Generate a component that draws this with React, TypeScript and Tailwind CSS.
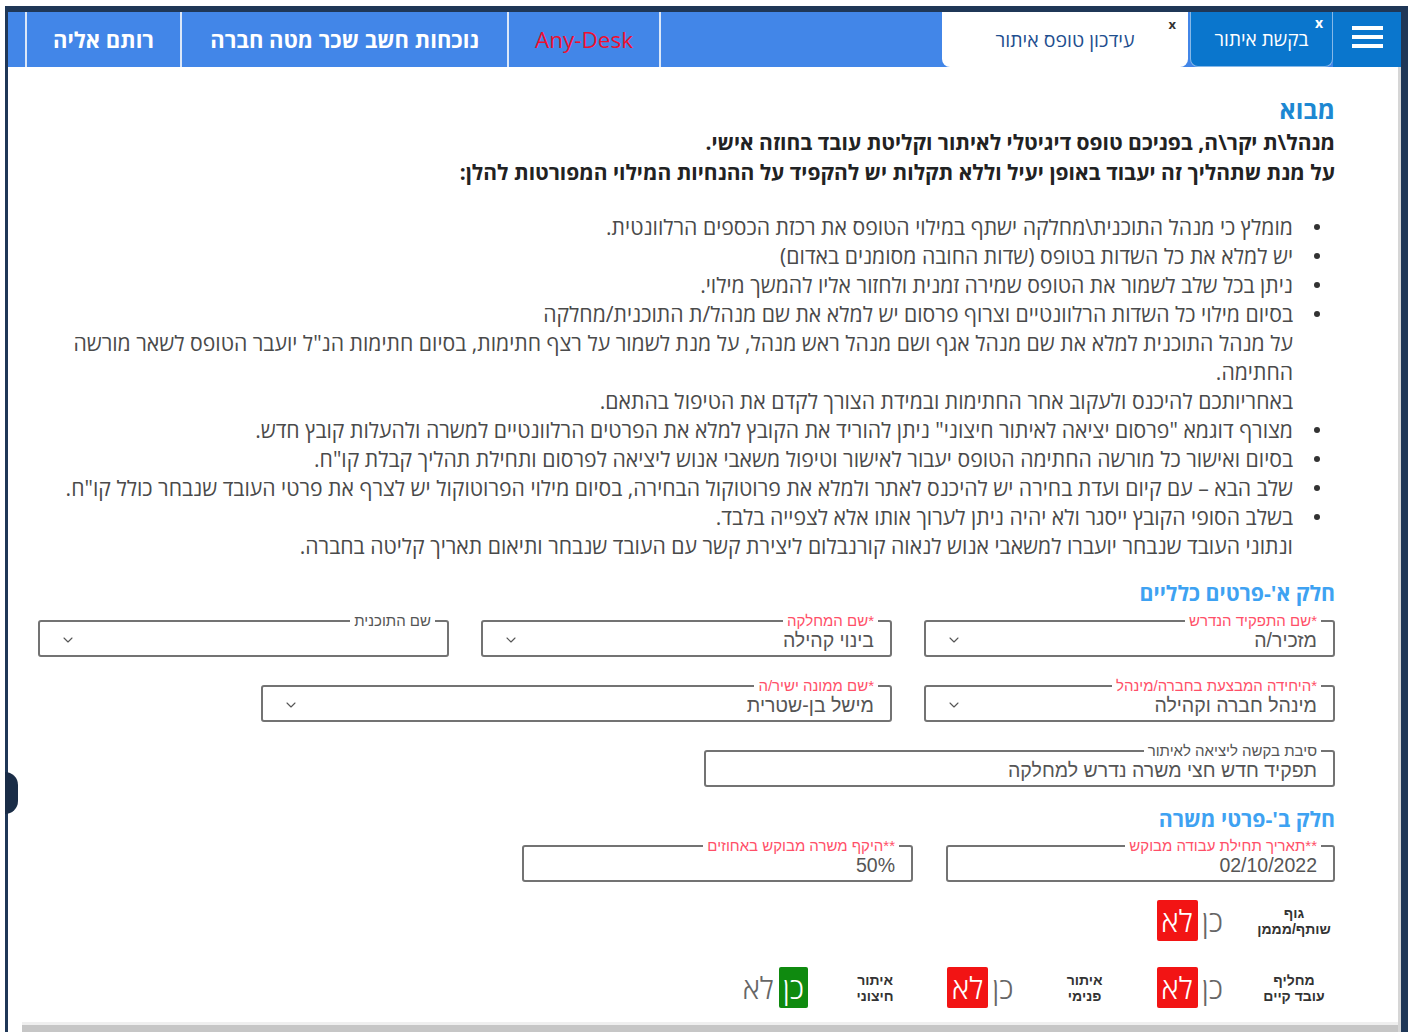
import { ChevronDown } from "lucide-react";

type FieldProps = {
  label: string;
  value?: string;
  required?: boolean;
  select?: boolean;
  width: string;
};

function Field({ label, value, required, select = true, width }: FieldProps) {
  return (
    <fieldset
      className={`${width} border-2 border-[#737373] rounded-[3px] px-[12px] pb-[4px] font-['Liberation_Sans','Open_Sans',sans-serif]`}
    >
      <legend
        className={`px-[4px] text-[15px] leading-[16px] ${required ? "text-[#ff4f68]" : "text-[#555]"}`}
      >
        {label}
      </legend>
      <div className="flex items-center h-[22px]">
        <span className="flex-1 pr-[4px] text-[19.5px] leading-[22px] text-[#555]">{value}</span>
        {select && <ChevronDown size={16} strokeWidth={1.6} className="text-[#555] ml-[8px]" />}
      </div>
    </fieldset>
  );
}

type Choice = "yes" | "no";

function YesNo({ label, value }: { label: [string, string]; value: Choice }) {
  return (
    <div className="flex items-center gap-[26px]">
      <div className="w-[82px] flex flex-col items-center text-[14px] font-bold leading-[16px] text-[#333] font-['Liberation_Sans','Open_Sans',sans-serif]">
        <span>{label[0]}</span>
        <span>{label[1]}</span>
      </div>
      <div className="flex items-center text-[30px] font-light leading-[41px]">
        <span
          className={`px-[4px] rounded-[2px] ${value === "yes" ? "bg-[#0f8a0f] text-white" : "text-[#666]"}`}
        >
          כן
        </span>
        <span
          className={`px-[5px] rounded-[2px] ${value === "no" ? "bg-[#f21414] text-white" : "text-[#666]"}`}
        >
          לא
        </span>
      </div>
    </div>
  );
}

const notes: { text: string; bullet: boolean }[] = [
  { text: "מומלץ כי מנהל התוכנית\\מחלקה ישתף במילוי הטופס את רכזת הכספים הרלוונטית.", bullet: true },
  { text: "יש למלא את כל השדות בטופס (שדות החובה מסומנים באדום)", bullet: true },
  { text: "ניתן בכל שלב לשמור את הטופס שמירה זמנית ולחזור אליו להמשך מילוי.", bullet: true },
  { text: "בסיום מילוי כל השדות הרלוונטיים וצרוף פרסום יש למלא את שם מנהל/ת התוכנית/מחלקה", bullet: true },
  {
    text: "על מנהל התוכנית למלא את שם מנהל אגף ושם מנהל ראש מנהל, על מנת לשמור על רצף חתימות, בסיום חתימות הנ\"ל יועבר הטופס לשאר מורשה החתימה.",
    bullet: false,
  },
  { text: "באחריותכם להיכנס ולעקוב אחר החתימות ובמידת הצורך לקדם את הטיפול בהתאם.", bullet: false },
  {
    text: "מצורף דוגמא \"פרסום יציאה לאיתור חיצוני\" ניתן להוריד את הקובץ למלא את הפרטים הרלוונטיים למשרה ולהעלות קובץ חדש.",
    bullet: true,
  },
  {
    text: "בסיום ואישור כל מורשה החתימה הטופס יעבור לאישור וטיפול משאבי אנוש ליציאה לפרסום ותחילת תהליך קבלת קו\"ח.",
    bullet: true,
  },
  {
    text: "שלב הבא – עם קיום ועדת בחירה יש להיכנס לאתר ולמלא את פרוטוקול הבחירה, בסיום מילוי הפרוטוקול יש לצרף את פרטי העובד שנבחר כולל קו\"ח.",
    bullet: true,
  },
  { text: "בשלב הסופי הקובץ ייסגר ולא יהיה ניתן לערוך אותו אלא לצפייה בלבד.", bullet: true },
  {
    text: "ונתוני העובד שנבחר יועברו למשאבי אנוש לנאוה קורנבלום ליצירת קשר עם העובד שנבחר ותיאום תאריך קליטה בחברה.",
    bullet: false,
  },
];

export default function App() {
  return (
    <div
      dir="rtl"
      className="h-[1032px] bg-white pt-[6px] px-[5px] overflow-hidden font-['Open_Sans','Liberation_Sans',sans-serif]"
    >
      <div className="relative h-full flex flex-col border-t-[6px] border-l-[3px] border-r-[7px] border-[#1f3757] bg-white">
        {/* top bar */}
        <header className="h-[55px] flex bg-[#4286e8] shrink-0">
          <div className="w-[68px] bg-[#0a76cd] flex items-center justify-center pb-[6px]">
            <div className="flex flex-col gap-[5px]">
              <span className="block w-[31px] h-[4px] bg-white" />
              <span className="block w-[31px] h-[4px] bg-white" />
              <span className="block w-[31px] h-[4px] bg-white" />
            </div>
          </div>
          <div className="relative w-[143px] bg-[#0a76cd] border-x border-b border-[#86b8e8] rounded-b-[8px] flex items-center justify-center text-[19px] text-white">
            בקשת איתור
            <span className="absolute top-[4px] right-[9px] text-[14px] font-bold leading-none">x</span>
          </div>
          <div className="relative w-[246px] mr-[2px] bg-white rounded-b-[8px] flex items-center justify-center text-[19.5px] text-[#1f4f8f]">
            עידכון טופס איתור
            <span className="absolute top-[6px] right-[12px] text-[13px] font-bold leading-none text-[#333]">x</span>
          </div>
          <div className="flex-1" />
          <nav className="flex ml-[17px]">
            <a className="w-[154px] flex items-center justify-center border-x-2 border-[#dbe7f8] text-[22.5px] font-medium text-[#ee1030]">
              Any-Desk
            </a>
            <a className="w-[327px] flex items-center justify-center border-l-2 border-[#dbe7f8] text-[22px] font-bold text-white">
              נוכחות חשב שכר מטה חברה
            </a>
            <a className="w-[155px] flex items-center justify-center border-l-2 border-[#dbe7f8] text-[22px] font-bold text-white">
              רותם אליה
            </a>
          </nav>
        </header>

        {/* page body */}
        <main className="flex-1 flex flex-col border-r-[3px] border-[#d6d6d6] min-h-0">
          <div className="flex-1 pr-[63px] pl-[30px] pt-[28px]">
            <h2 className="text-[25px] leading-[29px] font-bold text-[#1d88d2]">מבוא</h2>
            <p className="mt-[3px] text-[21px] leading-[30px] font-bold text-[#222]">
              מנהל\ת יקר\ה, בפניכם טופס דיגיטלי לאיתור וקליטת עובד בחוזה אישי.
              <br />
              על מנת שתהליך זה יעבוד באופן יעיל וללא תקלות יש להקפיד על ההנחיות המילוי המפורטות להלן:
            </p>

            <ul className="mt-[25px] text-[21.2px] leading-[29px] text-[#4a4a4a]">
              {notes.map((n, i) => (
                <li key={i} className="flex">
                  <span className="w-[42px] shrink-0 flex justify-start pr-[15px] pt-[12px]">
                    {n.bullet && <span className="block w-[6px] h-[6px] rounded-full bg-[#333]" />}
                  </span>
                  <span className="flex-1">{n.text}</span>
                </li>
              ))}
            </ul>

            <h3 className="mt-[20px] text-[21.3px] leading-[26px] font-bold text-[#3ea2f2]">חלק א'-פרטים כלליים</h3>
            <div className="mt-[7px] flex flex-col gap-[21px]">
              <div className="flex gap-[32px]">
                <Field width="w-[411px]" label="*שם התפקיד הנדרש" value="מזכיר/ה" required />
                <Field width="w-[411px]" label="*שם המחלקה" value="בינוי קהילה" required />
                <Field width="w-[411px]" label="שם התוכנית" />
              </div>
              <div className="flex gap-[32px]">
                <Field width="w-[411px]" label="*היחידה המבצעת בחברה/מינהל" value="מינהל חברה וקהילה" required />
                <Field width="w-[631px]" label="*שם ממונה ישיר/ה" value="מישל בן-שטרית" required />
              </div>
              <div className="flex">
                <Field width="w-[631px]" label="סיבת בקשה ליציאה לאיתור" value="תפקיד חדש חצי משרה נדרש למחלקה" select={false} />
              </div>
            </div>

            <h3 className="mt-[19px] text-[21.3px] leading-[26px] font-bold text-[#3ea2f2]">חלק ב'-פרטי משרה</h3>
            <div className="mt-[6px] flex gap-[33px]">
              <Field width="w-[389px]" label="**תאריך תחילת עבודה מבוקש" value="02/10/2022" required select={false} />
              <Field width="w-[391px]" label="**היקף משרה מבוקש באחוזים" value="50%" required select={false} />
            </div>

            <div className="mt-[18px] flex flex-col gap-[26px]">
              <div className="flex gap-[31px]">
                <YesNo label={["גוף", "שותף/מממן"]} value="no" />
              </div>
              <div className="flex gap-[31px]">
                <YesNo label={["מחליף", "עובד קיים"]} value="no" />
                <YesNo label={["איתור", "פנימי"]} value="no" />
                <YesNo label={["איתור", "חיצוני"]} value="yes" />
              </div>
            </div>
          </div>

          {/* horizontal scroll track */}
          <div className="shrink-0 ml-[14px] h-[10px] border-t-[3px] border-[#efefef] bg-[#c6c6c6]" />
        </main>

        {/* side drawer handle */}
        <span className="absolute left-[-3px] top-[760px] w-[13px] h-[42px] rounded-r-full bg-[#1a2d47]" />
      </div>
    </div>
  );
}
